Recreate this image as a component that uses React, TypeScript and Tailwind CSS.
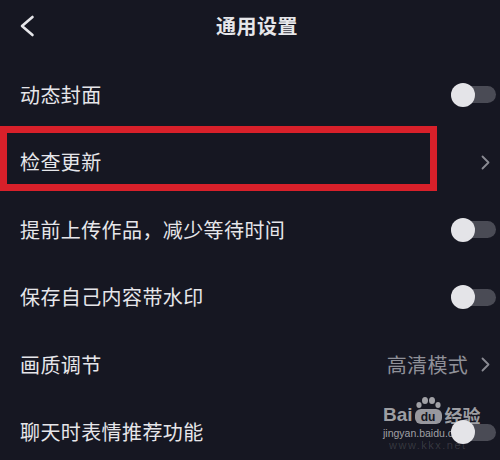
type Row = { label: string; kind: 'toggle' | 'link'; value?: string; boxed?: boolean }

const rows: Row[] = [
  { label: '动态封面', kind: 'toggle' },
  { label: '检查更新', kind: 'link', boxed: true },
  { label: '提前上传作品，减少等待时间', kind: 'toggle' },
  { label: '保存自己内容带水印', kind: 'toggle' },
  { label: '画质调节', kind: 'link', value: '高清模式' },
  { label: '聊天时表情推荐功能', kind: 'toggle' },
]

function Toggle() {
  return (
    <div className="relative w-[45px] h-[17px] rounded-full bg-[#4a4b55]">
      <div className="absolute z-20 left-0 top-1/2 -translate-y-1/2 w-[24px] h-[24px] rounded-full bg-[#e4e4e8]" />
    </div>
  )
}

function Chevron() {
  return (
    <svg width="9" height="15" viewBox="0 0 9 15" fill="none">
      <path d="M1.5 1.5 L7.5 7.5 L1.5 13.5" stroke="#8a8b93" strokeWidth="1.8" strokeLinecap="round" strokeLinejoin="round" />
    </svg>
  )
}

export default function App() {
  return (
    <div
      className="relative w-[500px] h-[460px] overflow-hidden bg-[#161722] text-[#e6e6ea]"
      style={{ fontFamily: '"Noto Sans CJK SC", "Noto Sans", sans-serif' }}
    >
      {/* 水印 */}
      <div className="absolute z-10 left-[383px] top-[405px] flex flex-col items-start text-[#c4c4c8]/80 leading-none">
        <div className="flex items-end">
          <span className="text-[19px] font-bold" style={{ fontFamily: '"Liberation Sans", sans-serif' }}>Bai</span>
          <span className="relative ml-[2px] w-[27px] h-[15px] flex items-center justify-center rounded-[6px] bg-[#c4c4c8]/75 text-[12px] font-bold text-[#161722]" style={{ fontFamily: '"Liberation Sans", sans-serif' }}>
            du
            <svg className="absolute -top-[13px] left-0" width="27" height="13" viewBox="0 0 27 13">
              <ellipse cx="4" cy="9" rx="2.6" ry="3" fill="#c4c4c8" fillOpacity="0.8" />
              <ellipse cx="10" cy="4.5" rx="3" ry="3.6" fill="#c4c4c8" fillOpacity="0.8" />
              <ellipse cx="17" cy="4.5" rx="3" ry="3.6" fill="#c4c4c8" fillOpacity="0.8" />
              <ellipse cx="23" cy="9" rx="2.6" ry="3" fill="#c4c4c8" fillOpacity="0.8" />
            </svg>
          </span>
          <span className="text-[18px] font-bold ml-[3px]">经验</span>
        </div>
        <span className="mt-[4px] text-[10.5px]" style={{ fontFamily: '"Liberation Sans", sans-serif' }}>jingyan.baidu.com</span>
        <span className="mt-[1px] ml-[6px] text-[11px] tracking-[1.5px] text-white/15" style={{ fontFamily: '"Liberation Sans", sans-serif' }}>www.kkx.net</span>
      </div>

      {/* 顶栏 */}
      <div className="relative flex items-center justify-center h-[52px] pl-[14px]">
        <svg className="absolute left-[19px] top-[15px]" width="16" height="22" viewBox="0 0 16 22" fill="none">
          <path d="M13.5 2 L3 11 L13.5 20" stroke="#e6e6ea" strokeWidth="2.6" strokeLinecap="round" strokeLinejoin="round" />
        </svg>
        <div className="text-[20px] font-bold tracking-[0.5px]">通用设置</div>
      </div>

      <div className="mt-[9px]">
        {rows.map(r => (
          <div key={r.label} className="relative flex items-center justify-between h-[67.5px] pl-[20px] pr-[4px]">
            <span className="text-[20px] tracking-[0.4px]">{r.label}</span>
            {r.kind === 'toggle' ? (
              <Toggle />
            ) : (
              <div className="flex items-center gap-[13px] text-[#8f9098] pr-[6px]">
                {r.value && <span className="text-[20px] tracking-[0.3px]">{r.value}</span>}
                <Chevron />
              </div>
            )}
            {r.boxed && (
              <div className="absolute left-0 top-[-3px] w-[437px] h-[65px] border-[7px] border-[#d8202a]" />
            )}
          </div>
        ))}
      </div>
    </div>
  )
}
